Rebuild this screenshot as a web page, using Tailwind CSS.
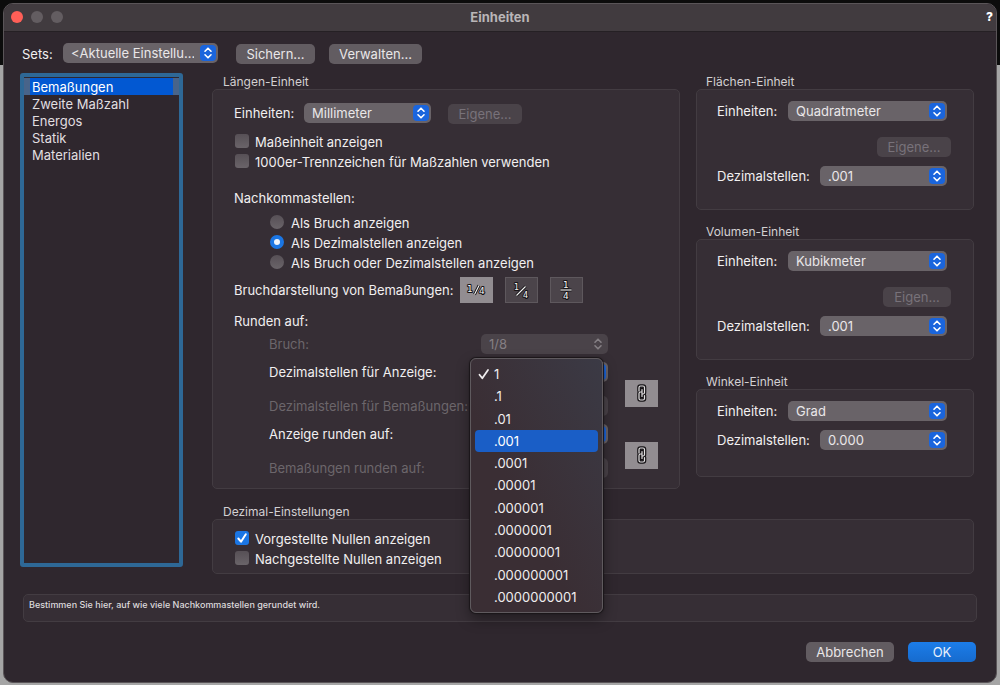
<!DOCTYPE html>
<html lang="de">
<head>
<meta charset="utf-8">
<title>Einheiten</title>
<script src="https://cdn.jsdelivr.net/npm/@tailwindcss/browser@4"></script>
</head>
<body class="flex min-h-screen flex-col bg-linear-to-b from-[#0c0c0c] from-[65px] to-[#a5a5a5] to-[65px] p-[3px] pb-[2px] font-[Inter,sans-serif] text-[13px] leading-5 text-[#f1eff0]">
<svg class="hidden">
  <symbol id="updown" viewBox="0 0 16 16"><path d="M5 6.200 8 3.200 11 6.200M5 9.800 8 12.800 11 9.800" fill="none" stroke="currentColor" stroke-width="1.600" stroke-linecap="round" stroke-linejoin="round"/></symbol>
  <symbol id="chain" viewBox="0 0 12 20">
    <g fill="none" stroke-linecap="round" stroke-linejoin="round">
      <path id="links" d="M3 8V4.500Q3 3 4.500 3H7Q8.500 3 8.500 4.500V9.500Q8.500 11 7 11H6V6.500M6 9H4.500Q3 9 3 10.500V15.500Q3 17 4.500 17H7Q8.500 17 8.500 15.500V12.500M6 11V13.500" stroke="#161316" stroke-width="3.600"/>
      <path d="M3 8V4.500Q3 3 4.500 3H7Q8.500 3 8.500 4.500V9.500Q8.500 11 7 11H6V6.500M6 9H4.500Q3 9 3 10.500V15.500Q3 17 4.500 17H7Q8.500 17 8.500 15.500V12.500M6 11V13.500" stroke="#e4e2e3" stroke-width="1.200"/>
    </g>
  </symbol>
</svg>
<main class="flex flex-1 flex-col overflow-hidden rounded-[10px] border border-[#5a5558] bg-[#2f272e]">
  <header class="flex h-7 items-center border-b border-[#252024] bg-[#413b3f] pr-[3px] pb-px pl-[7px]">
    <div class="flex flex-1 gap-2">
      <button aria-label="Schließen" class="size-3 rounded-full bg-[#ff5f57]"></button>
      <button aria-label="Minimieren" class="size-3 rounded-full bg-[#635d61]"></button>
      <button aria-label="Zoomen" class="size-3 rounded-full bg-[#635d61]"></button>
    </div>
    <h1 class="pr-1 font-bold text-[#b9b5b7]">Einheiten</h1>
    <div class="flex flex-1 justify-end"><button class="text-[12px] font-extrabold text-white">?</button></div>
  </header>

  <div class="flex items-start pt-[11px] pl-[18px]">
    <label for="sets" class="mt-px w-[41px]">Sets:</label>
    <div class="relative flex w-[155px]">
      <select id="sets" class="h-5 w-full appearance-none rounded-[5px] bg-[#696368] pr-6 pb-px pl-2 text-[#e9e7e8]"><option>&lt;Aktuelle Einstellu...</option></select>
      <svg class="pointer-events-none absolute top-0.5 right-0.5 size-4 rounded-[4px] bg-[#1a65dd] text-white"><use href="#updown"/></svg>
    </div>
    <button class="mt-px ml-[18px] h-5 w-[79px] rounded-[5px] bg-[#625c61] text-[#e9e7e8]">Sichern...</button>
    <button class="mt-px ml-[14px] h-5 w-[93px] rounded-[5px] bg-[#625c61] text-[#e9e7e8]">Verwalten...</button>
  </div>

  <div class="flex gap-[29px] pt-[9px] pr-[22px] pl-4">
    <ul class="mb-[7px] w-[165px] rounded-[3px] border-4 border-[#2e6896] pt-px leading-[15px] text-[#e1dfe0]">
      <li class="flex bg-[#48648a] px-1.5"><button class="flex-1 bg-[#0258d2] pt-0.5 pl-0.5 text-left text-white">Bemaßungen</button></li>
      <li class="flex px-1.5"><button class="flex-1 pt-0.5 pl-0.5 text-left">Zweite Maßzahl</button></li>
      <li class="flex px-1.5"><button class="flex-1 pt-0.5 pl-0.5 text-left">Energos</button></li>
      <li class="flex px-1.5"><button class="flex-1 pt-0.5 pl-0.5 text-left">Statik</button></li>
      <li class="flex px-1.5"><button class="flex-1 pt-0.5 pl-0.5 text-left">Materialien</button></li>
    </ul>

    <div class="flex-1">
      <div class="flex gap-4">
        <section class="flex flex-1 flex-col">
          <h2 class="pt-0.5 pl-[11px] text-[12px] leading-[14px] text-[#d3d0d2]">Längen-Einheit</h2>
          <div class="flex-1 rounded-[5px] border border-[#433c42] bg-[#362e35] px-[21px] pt-3 pb-[10px]">
            <div class="flex h-[22px] items-center">
              <label for="len" class="w-[70px]">Einheiten:</label>
              <div class="relative flex w-[127px]">
                <select id="len" class="h-5 w-full appearance-none rounded-[5px] bg-[#696368] pb-px pl-2 text-[#e9e7e8]"><option>Millimeter</option></select>
                <svg class="pointer-events-none absolute top-0.5 right-0.5 size-4 rounded-[4px] bg-[#1a65dd] text-white"><use href="#updown"/></svg>
              </div>
              <button disabled class="mt-0.5 ml-[17px] h-5 w-[74px] rounded-[5px] bg-[#4a4349] text-[#78727a]">Eigene...</button>
            </div>
            <label class="mt-2 flex h-5 items-center gap-1.5 pl-px"><input type="checkbox" class="mb-0.5 size-3.5 appearance-none rounded-[3px] bg-linear-to-b from-[#575056] to-[#6a6469]">Maßeinheit anzeigen</label>
            <label class="flex h-5 items-center gap-1.5 pl-px"><input type="checkbox" class="mb-0.5 size-3.5 appearance-none rounded-[3px] bg-linear-to-b from-[#575056] to-[#6a6469]">1000er-Trennzeichen für Maßzahlen verwenden</label>
            <h3 class="mt-4">Nachkommastellen:</h3>
            <div class="mt-[5px] pl-9">
              <label class="flex h-5 items-center gap-[7px]"><input type="radio" name="nk" class="mb-0.5 size-3.5 appearance-none rounded-full bg-linear-to-b from-[#575056] to-[#6a6469]">Als Bruch anzeigen</label>
              <label class="flex h-5 items-center gap-[7px]"><input type="radio" name="nk" checked class="mb-0.5 size-3.5 appearance-none rounded-full border-4 border-[#1b76e4] bg-[#eef4fc]">Als Dezimalstellen anzeigen</label>
              <label class="flex h-5 items-center gap-[7px]"><input type="radio" name="nk" class="mb-0.5 size-3.5 appearance-none rounded-full bg-linear-to-b from-[#575056] to-[#6a6469]">Als Bruch oder Dezimalstellen anzeigen</label>
            </div>
            <div class="mt-1 flex h-[26px] items-center">
              <span class="w-[226px] whitespace-nowrap">Bruchdarstellung von Bemaßungen:</span>
              <div class="flex gap-3">
                <button aria-label="Bruch in einer Zeile" class="h-[26px] w-[33px] bg-[#928d91]">
                  <svg viewBox="0 0 33 26" class="font-['DejaVu_Sans'] text-[9px]" fill="#f4f4f4" stroke="#161316" stroke-width="2" paint-order="stroke" stroke-linejoin="round"><text x="7" y="15">1</text><text x="19" y="17">4</text><path d="M14.500 17.500 19 8.500" stroke-width="3"/><path d="M14.500 17.500 19 8.500" stroke="#f4f4f4" stroke-width="1.100"/></svg>
                </button>
                <button aria-label="Schräger Bruch" class="h-[26px] w-[33px] border border-[#5e585d] bg-[#4b444a]">
                  <svg viewBox="1 1 31 24" class="font-['DejaVu_Sans'] text-[8px]" fill="#f4f4f4" stroke="#161316" stroke-width="2" paint-order="stroke" stroke-linejoin="round"><text x="9" y="13">1</text><text x="18" y="21">4</text><path d="M11.500 18.500 20.500 9.500" stroke-width="3"/><path d="M11.500 18.500 20.500 9.500" stroke="#f4f4f4" stroke-width="1.100"/></svg>
                </button>
                <button aria-label="Gestapelter Bruch" class="h-[26px] w-[33px] border border-[#5e585d] bg-[#4b444a]">
                  <svg viewBox="1 1 31 24" class="font-['DejaVu_Sans'] text-[9px]" fill="#f4f4f4" stroke="#161316" stroke-width="2" paint-order="stroke" stroke-linejoin="round"><text x="13" y="11">1</text><text x="13" y="22">4</text><path d="M10.500 13H21.500" stroke-width="3"/><path d="M10.500 13H21.500" stroke="#f4f4f4" stroke-width="1.100"/></svg>
                </button>
              </div>
            </div>
            <h3 class="mt-2">Runden auf:</h3>
            <div class="mt-[3px] flex h-5 items-center pl-[35px] text-[#6c666b]">
              <label for="bruch" class="w-[212px]">Bruch:</label>
              <div class="relative flex w-[127px]">
                <select id="bruch" disabled class="h-5 w-full appearance-none rounded-[5px] bg-[#4a4349] pb-px pl-2 text-[#857f84]"><option>1/8</option></select>
                <svg class="pointer-events-none absolute top-0.5 right-0.5 size-4 text-[#857f84]"><use href="#updown"/></svg>
              </div>
            </div>
            <div class="mt-2 flex items-center gap-[17px] pl-[35px]">
              <div class="flex flex-col gap-3.5">
                <div class="flex h-5 items-center">
                  <label for="anz" class="w-[212px] whitespace-nowrap">Dezimalstellen für Anzeige:</label>
                  <div class="relative flex w-[127px]">
                    <select id="anz" class="h-5 w-full appearance-none rounded-[5px] bg-[#696368] pl-2"><option>1</option></select>
                    <svg class="pointer-events-none absolute top-0.5 right-0.5 size-4 rounded-[4px] bg-[#1a65dd] text-white"><use href="#updown"/></svg>
                    <ul role="listbox" aria-label="Dezimalstellen für Anzeige" class="absolute -top-1 -left-[11px] z-10 grid h-[255px] w-[133px] auto-rows-fr rounded-md border border-[#5f5a5e] bg-linear-to-bl from-[#3b3a45] to-[#3a2e34] to-60% p-1 text-[#f0eeef] shadow-[0_0_1px_1px_#1a1619,0_6px_14px_#0006]">
                      <li role="option" aria-selected="true" class="flex items-center pl-[3px]"><svg class="mr-1 size-3" viewBox="0 0 12 12" fill="none" stroke="currentColor" stroke-width="1.800" stroke-linecap="round" stroke-linejoin="round"><path d="M1.500 6.800 4.300 10.300 10 2"/></svg>1</li>
                      <li role="option" class="flex items-center pl-[19px]">.1</li>
                      <li role="option" class="flex items-center pl-[19px]">.01</li>
                      <li role="option" class="flex items-center rounded-[4px] bg-[#1a5ec6] pl-[19px] text-white">.001</li>
                      <li role="option" class="flex items-center pl-[19px]">.0001</li>
                      <li role="option" class="flex items-center pl-[19px]">.00001</li>
                      <li role="option" class="flex items-center pl-[19px]">.000001</li>
                      <li role="option" class="flex items-center pl-[19px]">.0000001</li>
                      <li role="option" class="flex items-center pl-[19px]">.00000001</li>
                      <li role="option" class="flex items-center pl-[19px]">.000000001</li>
                      <li role="option" class="flex items-center pl-[19px]">.0000000001</li>
                    </ul>
                  </div>
                </div>
                <div class="flex h-5 items-center">
                  <label for="bem" class="w-[212px] whitespace-nowrap text-[#6c666b]">Dezimalstellen für Bemaßungen:</label>
                  <select id="bem" disabled class="h-5 w-[127px] appearance-none rounded-[5px] bg-[#4a4349]"><option></option></select>
                </div>
              </div>
              <button aria-label="Dezimalstellen verknüpfen" class="mt-2 flex h-[27px] w-[33px] items-center justify-center bg-[#928d91]"><svg class="h-5 w-3"><use href="#chain"/></svg></button>
            </div>
            <div class="mt-2 flex items-center gap-[17px] pl-[35px]">
              <div class="flex flex-col gap-3.5">
                <div class="flex h-5 items-center">
                  <label for="arund" class="w-[212px]">Anzeige runden auf:</label>
                  <div class="relative flex w-[127px]">
                    <select id="arund" class="h-5 w-full appearance-none rounded-[5px] bg-[#696368]"><option></option></select>
                    <svg class="pointer-events-none absolute top-0.5 right-0.5 size-4 rounded-[4px] bg-[#1a65dd] text-white"><use href="#updown"/></svg>
                  </div>
                </div>
                <div class="flex h-5 items-center">
                  <label for="brund" class="w-[212px] text-[#6c666b]">Bemaßungen runden auf:</label>
                  <select id="brund" disabled class="h-5 w-[127px] appearance-none rounded-[5px] bg-[#4a4349]"><option></option></select>
                </div>
              </div>
              <button aria-label="Rundung verknüpfen" class="mt-2 flex h-[27px] w-[33px] items-center justify-center bg-[#928d91]"><svg class="h-5 w-3"><use href="#chain"/></svg></button>
            </div>
          </div>
        </section>

        <div class="flex w-[278px] flex-col gap-[13px]">
          <section>
            <h2 class="pt-0.5 pl-[10px] text-[12px] leading-[14px] text-[#d3d0d2]">Flächen-Einheit</h2>
            <div class="rounded-[5px] border border-[#433c42] bg-[#362e35] pt-[11px] pr-[26px] pb-[23px] pl-5">
              <div class="flex items-center justify-between">
                <label for="fl">Einheiten:</label>
                <div class="relative flex w-[159px]">
                  <select id="fl" class="h-5 w-full appearance-none rounded-[5px] bg-[#696368] pb-px pl-2 text-[#e9e7e8]"><option>Quadratmeter</option></select>
                  <svg class="pointer-events-none absolute top-0.5 right-0.5 size-4 rounded-[4px] bg-[#1a65dd] text-white"><use href="#updown"/></svg>
                </div>
              </div>
              <div class="-mr-1 mt-4 flex justify-end"><button disabled class="h-5 w-[74px] rounded-[5px] bg-[#4a4349] text-[#78727a]">Eigene...</button></div>
              <div class="mt-[9px] flex items-center justify-between">
                <label for="fld">Dezimalstellen:</label>
                <div class="relative flex w-[127px]">
                  <select id="fld" class="h-5 w-full appearance-none rounded-[5px] bg-[#696368] pb-px pl-2 text-[#e9e7e8]"><option>.001</option></select>
                  <svg class="pointer-events-none absolute top-0.5 right-0.5 size-4 rounded-[4px] bg-[#1a65dd] text-white"><use href="#updown"/></svg>
                </div>
              </div>
            </div>
          </section>
          <section>
            <h2 class="pt-0.5 pl-[10px] text-[12px] leading-[14px] text-[#d3d0d2]">Volumen-Einheit</h2>
            <div class="rounded-[5px] border border-[#433c42] bg-[#362e35] pt-[11px] pr-[26px] pb-[23px] pl-5">
              <div class="flex items-center justify-between">
                <label for="vo">Einheiten:</label>
                <div class="relative flex w-[159px]">
                  <select id="vo" class="h-5 w-full appearance-none rounded-[5px] bg-[#696368] pb-px pl-2 text-[#e9e7e8]"><option>Kubikmeter</option></select>
                  <svg class="pointer-events-none absolute top-0.5 right-0.5 size-4 rounded-[4px] bg-[#1a65dd] text-white"><use href="#updown"/></svg>
                </div>
              </div>
              <div class="-mr-1 mt-4 flex justify-end"><button disabled class="h-5 w-[68px] rounded-[5px] bg-[#4a4349] text-[#78727a]">Eigen...</button></div>
              <div class="mt-[9px] flex items-center justify-between">
                <label for="vod">Dezimalstellen:</label>
                <div class="relative flex w-[127px]">
                  <select id="vod" class="h-5 w-full appearance-none rounded-[5px] bg-[#696368] pb-px pl-2 text-[#e9e7e8]"><option>.001</option></select>
                  <svg class="pointer-events-none absolute top-0.5 right-0.5 size-4 rounded-[4px] bg-[#1a65dd] text-white"><use href="#updown"/></svg>
                </div>
              </div>
            </div>
          </section>
          <section>
            <h2 class="pt-0.5 pl-[10px] text-[12px] leading-[14px] text-[#d3d0d2]">Winkel-Einheit</h2>
            <div class="rounded-[5px] border border-[#433c42] bg-[#362e35] pt-[11px] pr-[26px] pb-[26px] pl-5">
              <div class="flex items-center justify-between">
                <label for="wi">Einheiten:</label>
                <div class="relative flex w-[159px]">
                  <select id="wi" class="h-5 w-full appearance-none rounded-[5px] bg-[#696368] pb-px pl-2 text-[#e9e7e8]"><option>Grad</option></select>
                  <svg class="pointer-events-none absolute top-0.5 right-0.5 size-4 rounded-[4px] bg-[#1a65dd] text-white"><use href="#updown"/></svg>
                </div>
              </div>
              <div class="mt-[9px] flex items-center justify-between">
                <label for="wid">Dezimalstellen:</label>
                <div class="relative flex w-[127px]">
                  <select id="wid" class="h-5 w-full appearance-none rounded-[5px] bg-[#696368] pb-px pl-2 text-[#e9e7e8]"><option>0.000</option></select>
                  <svg class="pointer-events-none absolute top-0.5 right-0.5 size-4 rounded-[4px] bg-[#1a65dd] text-white"><use href="#updown"/></svg>
                </div>
              </div>
            </div>
          </section>
        </div>
      </div>

      <section class="mt-3.5">
        <h2 class="pt-0.5 pl-[11px] text-[12px] leading-[14px] text-[#d3d0d2]">Dezimal-Einstellungen</h2>
        <div class="rounded-[5px] border border-[#433c42] bg-[#362e35] px-[21px] pt-[9px] pb-1">
          <label class="flex h-5 items-center gap-1.5 pl-px"><span class="relative mb-0.5 flex"><input type="checkbox" checked class="size-3.5 appearance-none rounded-[3px] bg-[#1b76e4]"><svg class="pointer-events-none absolute inset-0 size-3.5" viewBox="0 0 14 14" fill="none" stroke="#fff" stroke-width="2" stroke-linecap="round" stroke-linejoin="round"><path d="M3.300 7.500 6 10.700 10.800 3.300"/></svg></span>Vorgestellte Nullen anzeigen</label>
          <label class="flex h-5 items-center gap-1.5 pl-px"><input type="checkbox" class="mb-0.5 size-3.5 appearance-none rounded-[3px] bg-linear-to-b from-[#575056] to-[#6a6469]">Nachgestellte Nullen anzeigen</label>
        </div>
      </section>
    </div>
  </div>

  <p class="mx-[19px] mt-5 h-7 rounded-[5px] border border-[#433c42] bg-[#362e35] px-[5px] text-[9px] font-medium text-[#dddadc]">Bestimmen Sie hier, auf wie viele Nachkommastellen gerundet wird.</p>

  <footer class="mt-5 flex justify-end gap-3.5 pr-5">
    <button class="h-5 w-[88px] rounded-[5px] bg-[#625c61] text-[#e9e7e8]">Abbrechen</button>
    <button class="h-5 w-[68px] rounded-[5px] bg-linear-to-b from-[#1c7de9] to-[#166bce] text-[#e9f1fb]">OK</button>
  </footer>
</main>
</body>
</html>
